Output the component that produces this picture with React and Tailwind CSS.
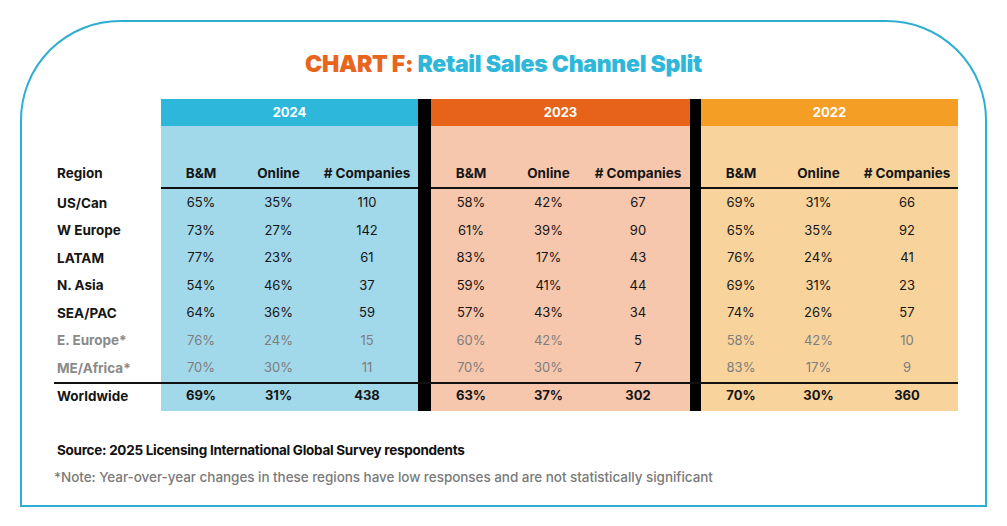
import React from 'react';

const rows = [
  { region: 'US/Can', v: [['65%', '35%', '110'], ['58%', '42%', '67'], ['69%', '31%', '66']] },
  { region: 'W Europe', v: [['73%', '27%', '142'], ['61%', '39%', '90'], ['65%', '35%', '92']] },
  { region: 'LATAM', v: [['77%', '23%', '61'], ['83%', '17%', '43'], ['76%', '24%', '41']] },
  { region: 'N. Asia', v: [['54%', '46%', '37'], ['59%', '41%', '44'], ['69%', '31%', '23']] },
  { region: 'SEA/PAC', v: [['64%', '36%', '59'], ['57%', '43%', '34'], ['74%', '26%', '57']] },
  { region: 'E. Europe*', muted: true, v: [['76%', '24%', '15'], ['60%', '42%', '5'], ['58%', '42%', '10']] },
  { region: 'ME/Africa*', muted: true, v: [['70%', '30%', '11'], ['70%', '30%', '7'], ['83%', '17%', '9']] },
];

const groups = [
  { body: 'bg-[#a1d8ea]', w: 'grid-cols-[80px_75px_102px]' },
  { body: 'bg-[#f7c7ad]', w: 'grid-cols-[80px_75px_104px]' },
  { body: 'bg-[#f8d49c]', w: 'grid-cols-[80px_75px_102px]' },
];

const font = { fontFamily: 'Inter, "Noto Sans", sans-serif' };

// 2023 companies column stays dark even on low-response rows
const isMutedCell = (muted, g, c) => muted && !(g === 1 && c === 2);

const Group = ({ g, cells, className = '', cellClass = '', mutedRow = false }) => (
  <div className={`grid ${groups[g].w} ${groups[g].body} ${className}`}>
    {cells.map((t, c) => (
      <div
        key={c}
        className={`text-center ${cellClass} ${isMutedCell(mutedRow, g, c) ? 'text-[#7d7d7d]' : ''}`}
      >
        {t}
      </div>
    ))}
  </div>
);

const Bar = ({ g }) => <div className={g === 0 ? 'w-[13px] bg-black' : 'w-[11px] bg-black'} />;

const Row = ({ children, className = '' }) => <div className={`flex ${className}`}>{children}</div>;

export default function App() {
  return (
    <div className="w-[1007px] h-[526px] bg-white pt-[20px] pl-[20px]" style={font}>
      <div className="w-[967px] h-[487px] border-2 border-[#2eaed2] rounded-t-[100px] flex flex-col">
        <h1 className="mt-[30px] text-center text-[23px] font-black tracking-[-0.3px] leading-[24px]">
          <span className="text-[#e8651e]">CHART F: </span>
          <span className="text-[#2fb7da]">Retail Sales Channel Split</span>
        </h1>

        <div className="mt-[23px] ml-[32px] text-[13px] text-[#151515]">
          {/* year headers */}
          <Row className="h-[27px]">
            <div className="w-[107px]" />
            <div className="w-[257px] bg-[#2db8db] text-white font-bold flex items-center justify-center">2024</div>
            <Bar g={0} />
            <div className="w-[259px] bg-[#e8631a] text-white font-bold flex items-center justify-center">2023</div>
            <Bar g={1} />
            <div className="w-[257px] bg-[#f59e25] text-white font-bold flex items-center justify-center">2022</div>
          </Row>

          {/* column headers */}
          <Row className="h-[63px]">
            <div className="w-[107px] pl-[3px] flex items-end pb-[6px] font-bold text-[13.5px]">Region</div>
            {[0, 1, 2].map((g) => (
              <React.Fragment key={g}>
                <Group
                  g={g}
                  cells={['B&M', 'Online', '# Companies']}
                  className="border-b-2 border-[#111] items-end pb-[4px] font-bold text-[13.5px]"
                />
                {g < 2 && <Bar g={g} />}
              </React.Fragment>
            ))}
          </Row>

          {rows.map((r) => (
            <Row key={r.region} className="h-[27.5px]">
              <div
                className={`w-[107px] pl-[3px] flex items-center font-bold text-[13.5px] ${r.muted ? 'text-[#8a8a8a]' : ''}`}
              >
                {r.region}
              </div>
              {[0, 1, 2].map((g) => (
                <React.Fragment key={g}>
                  <Group g={g} cells={r.v[g]} mutedRow={r.muted} className="items-center" />
                  {g < 2 && <Bar g={g} />}
                </React.Fragment>
              ))}
            </Row>
          ))}

          <Row className="h-[29.5px] border-t-2 border-[#111] w-[904px] font-bold">
            <div className="w-[107px] pl-[3px] flex items-center text-[13.5px] pb-[3px]">Worldwide</div>
            {[
              ['69%', '31%', '438'],
              ['63%', '37%', '302'],
              ['70%', '30%', '360'],
            ].map((v, g) => (
              <React.Fragment key={g}>
                <Group g={g} cells={v} className="items-center pb-[3px]" />
                {g < 2 && <Bar g={g} />}
              </React.Fragment>
            ))}
          </Row>
        </div>

        <p className="mt-[29px] ml-[35px] text-[13.5px] font-bold text-[#111] tracking-[-0.28px]">
          Source: 2025 Licensing International Global Survey respondents
        </p>
        <p className="mt-[7px] ml-[32px] text-[13.5px] font-medium text-[#7a7a7a] tracking-[-0.05px]">
          *Note: Year-over-year changes in these regions have low responses and are not statistically significant
        </p>
      </div>
    </div>
  );
}
